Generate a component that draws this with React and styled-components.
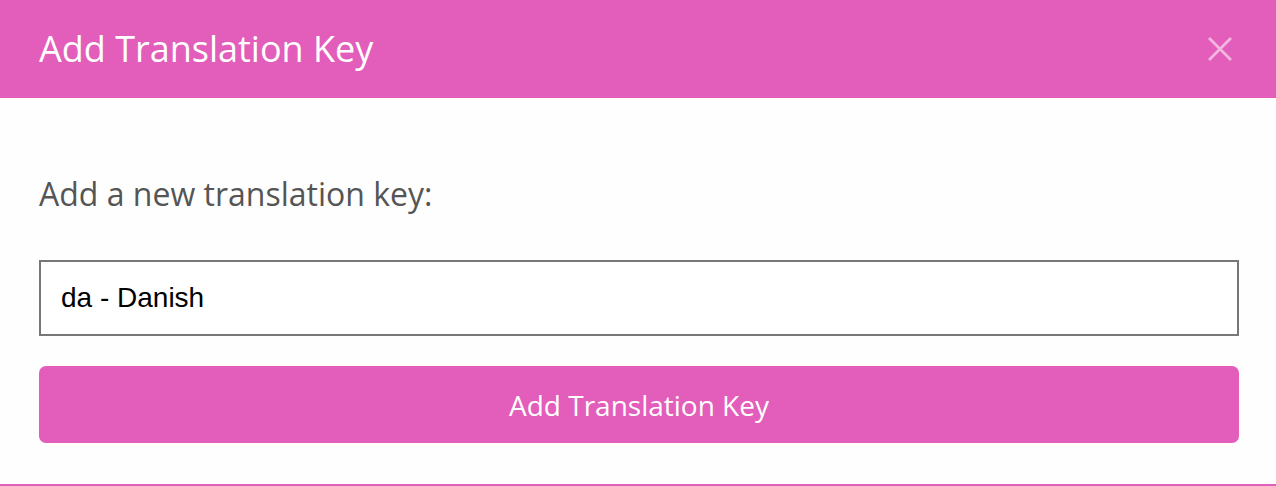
import React from "react";
import styled, { createGlobalStyle } from "styled-components";

const Global = createGlobalStyle`
  html, body { margin: 0; padding: 0; background: #fefefe; }
  body { font-family: "Open Sans", "Noto Sans", sans-serif; }
  * { box-sizing: border-box; }
`;

const Modal = styled.div`
  width: 1276px;
  height: 486px;
  display: flex;
  flex-direction: column;
  background: #fefefe;
  border-bottom: 2px solid #e35dbb;
`;

const Header = styled.div`
  height: 98px;
  background: #e35dbb;
  display: flex;
  align-items: center;
  justify-content: space-between;
  padding: 0 44px 0 39px;
`;

const Title = styled.h1`
  margin: 0;
  font-size: 36px;
  font-weight: 400;
  color: #fff;
  line-height: 1;
`;

const Close = styled.button`
  width: 24px;
  height: 24px;
  padding: 0;
  border: none;
  background: transparent;
  display: flex;
  align-items: center;
  justify-content: center;
  cursor: pointer;
`;

const Body = styled.div`
  flex: 1;
  display: flex;
  flex-direction: column;
  padding: 74px 37px 0 39px;
`;

const Label = styled.label`
  font-size: 32px;
  color: #555;
  line-height: 44px;
  margin-bottom: 44px;
`;

const Input = styled.input`
  height: 76px;
  width: 100%;
  border: 2px solid #777;
  padding: 0 20px;
  font-family: "Liberation Sans", Arial, sans-serif;
  font-size: 28px;
  color: #000;
  background: #fff;
  outline: none;
`;

const Button = styled.button`
  margin-top: 30px;
  height: 77px;
  width: 100%;
  border: none;
  border-radius: 7px;
  background: #e35dbb;
  color: #fff;
  font-family: "Open Sans", sans-serif;
  font-size: 28px;
  cursor: pointer;
`;

export default function App() {
  return (
    <>
      <Global />
      <Modal>
        <Header>
          <Title>Add Translation Key</Title>
          <Close aria-label="Close">
            <svg width="24" height="24" viewBox="0 0 24 24">
              <path d="M1 1 L23 23 M23 1 L1 23" stroke="rgba(255,255,255,0.55)" strokeWidth="2.8" strokeLinecap="butt" />
            </svg>
          </Close>
        </Header>
        <Body>
          <Label>Add a new translation key:</Label>
          <Input defaultValue="da - Danish" />
          <Button>Add Translation Key</Button>
        </Body>
      </Modal>
    </>
  );
}
